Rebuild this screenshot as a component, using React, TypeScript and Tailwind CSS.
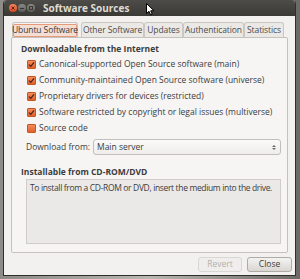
const checks = [
  { label: "Canonical-supported Open Source software (main)", on: true },
  { label: "Community-maintained Open Source software (universe)", on: true },
  { label: "Proprietary drivers for devices (restricted)", on: true },
  { label: "Software restricted by copyright or legal issues (multiverse)", on: true },
  { label: "Source code", on: false },
];

const tabs = [
  { label: "Ubuntu Software", w: "w-[66px]", active: true },
  { label: "Other Software", w: "w-[63px]" },
  { label: "Updates", w: "w-[39px]" },
  { label: "Authentication", w: "w-[61px]" },
  { label: "Statistics", w: "w-[40px]" },
];

function Check({ on }: { on: boolean }) {
  return (
    <div className="w-[9px] h-[9px] rounded-[1px] border border-[#c4571f] bg-gradient-to-b from-[#f08a5c] to-[#e0602a] flex items-center justify-center">
      {on && (
        <svg width="7" height="7" viewBox="0 0 7 7">
          <path d="M1 3.6 L2.8 5.4 L6 1.4" fill="none" stroke="#4a2414" strokeWidth="1.3" />
        </svg>
      )}
    </div>
  );
}

export default function App() {
  return (
    <div
      className="w-[300px] h-[279px] bg-gradient-to-r from-[#8c8b87] via-[#b9b7b2] to-[#6b6a66] relative overflow-hidden text-[#3c3c3c]"
      style={{ fontFamily: '"Open Sans", "Noto Sans", sans-serif' }}
    >
      <div className="ml-[3px] w-[293px] h-[276px] flex flex-col rounded-t-[4px] overflow-hidden border border-[#2f2e2b] border-t-0 bg-[#f2f1f0]">
        {/* title bar */}
        <div className="h-[16px] shrink-0 bg-gradient-to-b from-[#4d4c48] to-[#3a3935] flex items-center pl-[5px] gap-[1px]">
          <div className="w-[8px] h-[8px] rounded-full bg-gradient-to-b from-[#f7825a] to-[#d9471a] flex items-center justify-center">
            <svg width="4" height="4" viewBox="0 0 4 4">
              <path d="M0.5 0.5 L3.5 3.5 M3.5 0.5 L0.5 3.5" stroke="#5a2210" strokeWidth="1" />
            </svg>
          </div>
          <div className="w-[8px] h-[8px] rounded-full bg-gradient-to-b from-[#8a8984] to-[#5d5c58] flex items-center justify-center">
            <div className="w-[4px] h-[1px] bg-[#3a3935]" />
          </div>
          <div className="w-[8px] h-[8px] rounded-full bg-gradient-to-b from-[#8a8984] to-[#5d5c58] flex items-center justify-center">
            <div className="w-[4px] h-[4px] border border-[#3a3935]" />
          </div>
          <span className="ml-[7px] text-[10px] font-bold text-[#dfdbd2] leading-none whitespace-nowrap">
            Software Sources
          </span>
        </div>

        {/* body */}
        <div className="flex-1 flex flex-col pt-[6px] pl-[7px] pr-[7px]">
          <div className="h-[15px] flex items-end pl-[1px]">
            {tabs.map((t) => (
              <div
                key={t.label}
                className={`${t.w} h-[15px] shrink-0 rounded-t-[3px] border border-b-0 flex items-center justify-center text-[8.5px] tracking-[-0.1px] leading-none whitespace-nowrap ${
                  t.active
                    ? "border-[#c8c5c0] bg-[#f6f5f4] mr-[3px]"
                    : "border-[#cbc8c3] bg-[#ebe9e6] text-[#4c4c4c]"
                }`}
              >
                {t.active ? (
                  <span className="h-[13px] w-[64px] flex items-center justify-center border border-[#e59b7a] bg-[#f4ddd2] rounded-[1px]">
                    {t.label}
                  </span>
                ) : (
                  t.label
                )}
              </div>
            ))}
          </div>

          {/* notebook panel */}
          <div className="h-[216px] border border-[#c5c1bc] rounded-[2px] bg-[#f6f5f4] flex flex-col pt-[5px] pl-[9px] pr-[6px]">
            <div className="h-[12px] flex items-center text-[8.5px] font-bold leading-none whitespace-nowrap">
              Downloadable from the Internet
            </div>
            <div className="mt-[1px] flex flex-col pl-[6px]">
              {checks.map((c) => (
                <div key={c.label} className="h-[16px] flex items-center gap-[3px]">
                  <Check on={c.on} />
                  <span className="text-[8.5px] leading-none whitespace-nowrap">{c.label}</span>
                </div>
              ))}
            </div>
            <div className="mt-[3px] h-[16px] flex items-center pl-[5px]">
              <span className="w-[67px] text-[8.5px] leading-none whitespace-nowrap">Download from:</span>
              <div className="w-[188px] h-[16px] rounded-[3px] border border-[#c2beb9] bg-gradient-to-b from-[#fbfafa] to-[#eeedeb] flex items-center pl-[3px] pr-[4px]">
                <span className="flex-1 text-[8.5px] leading-none">Main server</span>
                <svg width="4" height="7" viewBox="0 0 4 7">
                  <path d="M0 3 L2 1 L4 3 Z M0 4 L2 6 L4 4 Z" fill="#6a6a66" />
                </svg>
              </div>
            </div>
            <div className="mt-[11px] h-[12px] flex items-center text-[8.5px] font-bold leading-none whitespace-nowrap">
              Installable from CD-ROM/DVD
            </div>
            <div className="mt-[1px] ml-[5px] h-[65px] border border-[#d0cdc9] bg-[#ebe9e7] pl-[3px] pt-[4px]">
              <div className="h-[9px] flex items-center text-[8.5px] tracking-[-0.35px] leading-none whitespace-nowrap">
                To install from a CD-ROM or DVD, insert the medium into the drive.
              </div>
            </div>
          </div>

          {/* buttons */}
          <div className="mt-[4px] h-[15px] flex justify-end gap-[5px] -mr-[4px]">
            <div className="w-[44px] h-[15px] rounded-[3px] border border-[#d9d7d3] bg-[#efeeec] flex items-center justify-center text-[8.5px] leading-none text-[#b3b0ab]">
              Revert
            </div>
            <div className="w-[45px] h-[15px] rounded-[3px] border border-[#aeaaa4] bg-gradient-to-b from-[#f4f3f1] to-[#d9d6d2] flex items-center justify-center text-[8.5px] leading-none">
              Close
            </div>
          </div>
        </div>
      </div>

      {/* mouse pointer */}
      <svg className="absolute left-[146px] top-[3px]" width="9" height="13" viewBox="0 0 9 13">
        <path d="M0.5 0.5 L0.5 10.5 L3 8.3 L4.6 12 L6.2 11.3 L4.7 7.8 L8 7.8 Z" fill="#ffffff" stroke="#000000" strokeWidth="1" />
      </svg>
    </div>
  );
}
